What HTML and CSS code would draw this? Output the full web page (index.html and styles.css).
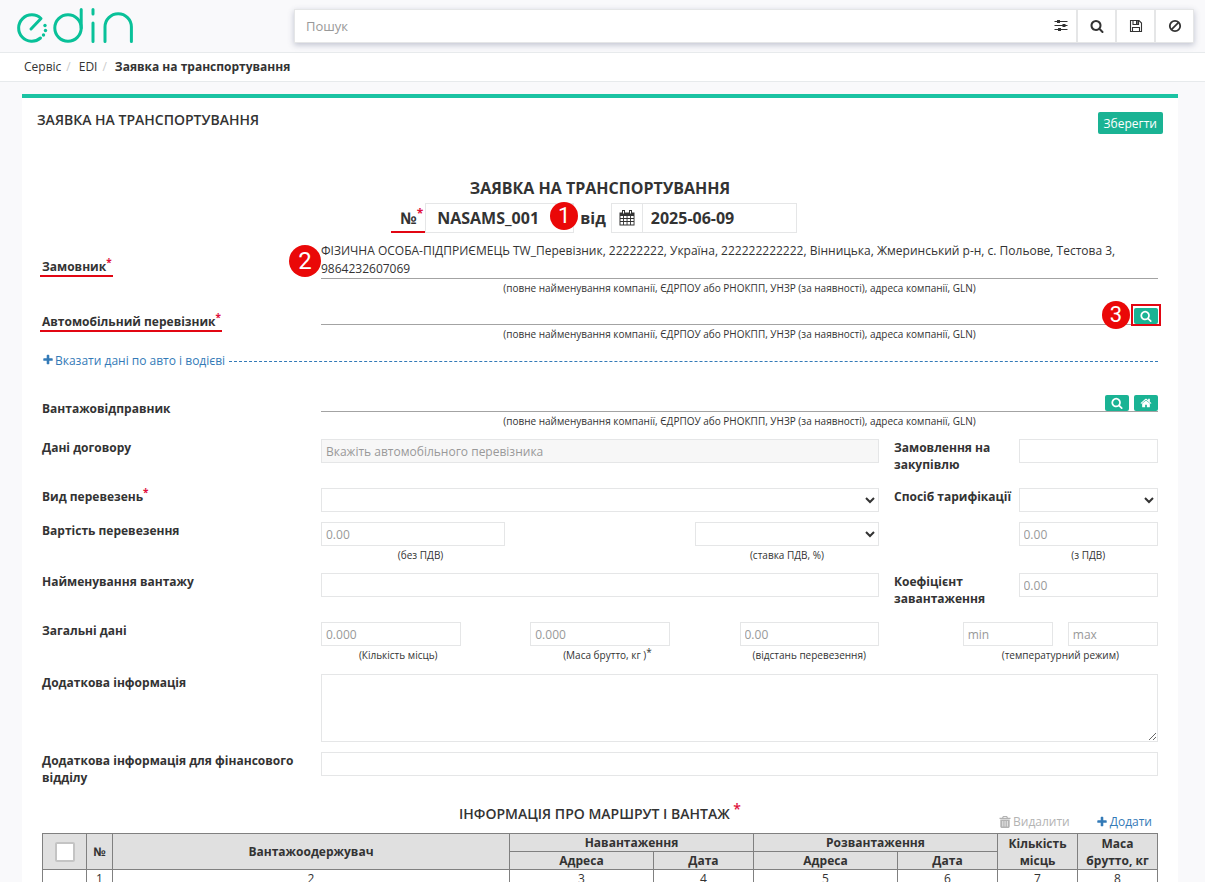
FILE: index.html
```html
<!DOCTYPE html>
<html lang="uk">
<head>
    <meta charset="UTF-8">
    <meta name="viewport" content="width=device-width, initial-scale=1.0">
    <title>Заявка на транспортування</title>
    <link rel="stylesheet" href="styles.css">
</head>
<body>
    <!-- icons -->
    <svg class="sprite" aria-hidden="true">
        <symbol id="i-search" viewBox="0 0 1792 1792"><path d="M1216 832q0-185-131.500-316.500t-316.500-131.500-316.500 131.500-131.500 316.500 131.500 316.500 316.500 131.500 316.500-131.500 131.500-316.500zm512 832q0 52-38 90t-90 38q-54 0-90-38l-343-342q-179 124-399 124-143 0-273.500-55.500t-225-150-150-225-55.500-273.500 55.500-273.500 150-225 225-150 273.500-55.500 273.500 55.500 225 150 150 225 55.500 273.500q0 220-124 399l343 343q37 37 37 90z"/></symbol>
        <symbol id="i-home" viewBox="0 0 1792 1792"><path d="M1472 992v480q0 26-19 45t-45 19h-384v-384h-256v384h-384q-26 0-45-19t-19-45v-480q0-1 .5-3t.5-3l575-474 575 474q1 2 1 6zm223-69l-62 74q-8 9-21 11h-3q-13 0-21-7l-692-577-692 577q-12 8-24 7-13-2-21-11l-62-74q-8-10-7-23.500t11-21.500l719-599q32-26 76-26t76 26l244 204v-195q0-14 9-23t23-9h192q14 0 23 9t9 23v408l219 182q10 8 11 21.500t-7 23.500z"/></symbol>
        <symbol id="i-plus" viewBox="0 0 1792 1792"><path d="M1600 736v192q0 40-28 68t-68 28h-416v416q0 40-28 68t-68 28h-192q-40 0-68-28t-28-68v-416h-416q-40 0-68-28t-28-68v-192q0-40 28-68t68-28h416v-416q0-40 28-68t68-28h192q40 0 68 28t28 68v416h416q40 0 68 28t28 68z"/></symbol>
        <symbol id="i-sliders" viewBox="0 0 14 14"><path d="M.5 2.500h13M.5 6.500h13M.5 10.500h13" fill="none" stroke="currentColor"/><path d="M3 1h3v3H3zM8.500 5h3v3h-3zM4 9h3v3H4z"/></symbol>
        <symbol id="i-save" viewBox="0 0 14 14"><path d="M1.500 1.500h8.500l2.500 2.500v8.500h-11zM3.500 12.500v-4h7v4M4 1.500v4h5.500v-4" fill="none" stroke="currentColor" stroke-width="1.100"/><path d="M7 2h1.700v3H7z"/></symbol>
        <symbol id="i-ban" viewBox="0 0 14 14"><g fill="none" stroke="currentColor" stroke-width="1.800"><circle cx="7" cy="7" r="5.200"/><path d="M3.400 10.600l7.200-7.200"/></g></symbol>
        <symbol id="i-trash" viewBox="0 0 12 12"><path fill-rule="evenodd" d="M4 0h4l1 1.700h2.500V3H.5V1.700H3zM4.300 1.700h3.400L7.300 1H4.700z"/><path fill-rule="evenodd" d="M1.300 3.500h9.400V11l-1 1H2.300l-1-1zM3.500 5v5.500h.7V5zm2.200 0v5.500h.7V5zm2.200 0v5.500h.7V5z"/></symbol>
        <symbol id="i-calendar" viewBox="0 0 16 16"><path d="M.5 2.500h15V15.500H.5z"/><path fill="#fff" d="M1.500 6h2.600v2H1.500zm3.500 0h2.600v2H5zm3.500 0h2.600v2H8.500zM12 6h2.600v2H12zM1.500 9h2.600v2H1.500zM5 9h2.600v2H5zm3.500 0h2.600v2H8.500zM12 9h2.600v2H12zM1.500 12h2.600v2.500H1.500zm3.500 0h2.600v2.500H5zm3.500 0h2.600v2.500H8.500zm3.500 0h2.600v2.500H12z"/><path d="M3 0h3v4.500H3zm7 0h3v4.500h-3z"/><path fill="#fff" d="M4 1h1v2.500H4zm7 0h1v2.500h-1z"/></symbol>
    </svg>

    <header class="topbar">
        <a href="#" class="logo" aria-label="edin">
            <svg width="120" height="40" viewBox="15 6 120 40">
                <g fill="none" stroke="#09c199" stroke-width="3" stroke-linecap="round" stroke-linejoin="round">
                    <path d="M31 29l10-10.500A13.200 13.200 0 1 0 40.500 38"/>
                    <circle cx="68" cy="28" r="13.200"/>
                    <path d="M81.200 9.500V28M93 9.500V14M93 23v18.500M105 41.500V27a13.200 13.200 0 0 1 26.400 0v14.500"/>
                </g>
                <g fill="#09c199"><circle cx="45" cy="25.500" r="1.700"/><circle cx="45.500" cy="30.500" r="1.700"/><circle cx="43.500" cy="35" r="1.700"/></g>
            </svg>
        </a>
        <form class="search">
            <input type="text" class="search-input" placeholder="Пошук" aria-label="Пошук">
            <button type="button" class="search-btn search-filter" aria-label="Фільтр"><svg class="icon-lg"><use href="#i-sliders"/></svg></button>
            <button type="button" class="search-btn" aria-label="Шукати"><svg class="icon-lg"><use href="#i-search"/></svg></button>
            <button type="button" class="search-btn" aria-label="Зберегти пошук"><svg class="icon-lg"><use href="#i-save"/></svg></button>
            <button type="button" class="search-btn" aria-label="Очистити"><svg class="icon-lg"><use href="#i-ban"/></svg></button>
        </form>
    </header>

    <nav class="breadcrumb">
        <a href="#">Сервіс</a>
        <a href="#">EDI</a>
        <strong>Заявка на транспортування</strong>
    </nav>

    <main class="panel">
        <div class="panel-head">
            <h1>ЗАЯВКА НА ТРАНСПОРТУВАННЯ</h1>
            <button type="button" class="btn-save">Зберегти</button>
        </div>

        <form class="order">
            <h2>ЗАЯВКА НА ТРАНСПОРТУВАННЯ</h2>
            <div class="doc-number">
                <label for="number" class="number-label">№<sup>*</sup></label>
                <div class="number-box">
                    <input type="text" id="number" value="NASAMS_001">
                    <span class="callout callout-number">1</span>
                </div>
                <label for="date" class="date-label">від</label>
                <span class="addon"><svg class="icon-cal"><use href="#i-calendar"/></svg></span>
                <input type="text" id="date" value="2025-06-09">
            </div>

            <div class="row party">
                <div class="label"><span class="marked">Замовник<sup>*</sup></span></div>
                <div class="wide">
                    <div class="line">
                        <span class="callout callout-customer">2</span>
                        ФІЗИЧНА ОСОБА-ПІДПРИЄМЕЦЬ TW_Перевізник, 22222222, Україна, 222222222222, Вінницька, Жмеринський р-н, с. Польове, Тестова 3, 9864232607069
                    </div>
                    <div class="hint">(повне найменування компанії, ЄДРПОУ або РНОКПП, УНЗР (за наявності), адреса компанії, GLN)</div>
                </div>
            </div>

            <div class="row party">
                <div class="label"><span class="marked">Автомобільний перевізник<sup>*</sup></span></div>
                <div class="wide">
                    <div class="line line-tools">
                        <span class="framed">
                            <span class="callout callout-carrier">3</span>
                            <button type="button" class="btn-icon" aria-label="Обрати перевізника"><svg class="icon"><use href="#i-search"/></svg></button>
                        </span>
                    </div>
                    <div class="hint">(повне найменування компанії, ЄДРПОУ або РНОКПП, УНЗР (за наявності), адреса компанії, GLN)</div>
                </div>
            </div>

            <div class="more">
                <a href="#"><svg class="icon"><use href="#i-plus"/></svg>Вказати дані по авто і водієві</a>
            </div>

            <div class="row party">
                <div class="label">Вантажовідправник</div>
                <div class="wide">
                    <div class="line line-tools">
                        <button type="button" class="btn-icon" aria-label="Обрати вантажовідправника"><svg class="icon"><use href="#i-search"/></svg></button>
                        <button type="button" class="btn-icon" aria-label="Моя компанія"><svg class="icon"><use href="#i-home"/></svg></button>
                    </div>
                    <div class="hint">(повне найменування компанії, ЄДРПОУ або РНОКПП, УНЗР (за наявності), адреса компанії, GLN)</div>
                </div>
            </div>

            <div class="row">
                <label class="label" for="contract">Дані договору</label>
                <div><input type="text" id="contract" placeholder="Вкажіть автомобільного перевізника" disabled></div>
                <label class="label label-side" for="purchase">Замовлення на закупівлю</label>
                <div><input type="text" id="purchase"></div>
            </div>

            <div class="row">
                <label class="label" for="kind">Вид перевезень<sup>*</sup></label>
                <div><select id="kind"><option></option></select></div>
                <label class="label label-side" for="tariff">Спосіб тарифікації</label>
                <div><select id="tariff"><option></option></select></div>
            </div>

            <div class="row">
                <label class="label" for="cost">Вартість перевезення</label>
                <div class="parts thirds">
                    <div>
                        <input type="text" id="cost" placeholder="0.00">
                        <div class="hint hint-shift">(без ПДВ)</div>
                    </div>
                    <div>
                        <select id="vat" aria-label="ставка ПДВ"><option></option></select>
                        <div class="hint">(ставка ПДВ, %)</div>
                    </div>
                </div>
                <div class="last">
                    <input type="text" placeholder="0.00" aria-label="з ПДВ">
                    <div class="hint">(з ПДВ)</div>
                </div>
            </div>

            <div class="row">
                <label class="label" for="cargo">Найменування вантажу</label>
                <div><input type="text" id="cargo"></div>
                <label class="label label-side" for="load">Коефіцієнт завантаження</label>
                <div><input type="text" id="load" placeholder="0.00"></div>
            </div>

            <div class="row">
                <label class="label" for="places">Загальні дані</label>
                <div class="parts quarters">
                    <div>
                        <input type="text" id="places" placeholder="0.000">
                        <div class="hint hint-shift">(Кількість місць)</div>
                    </div>
                    <div>
                        <input type="text" placeholder="0.000" aria-label="Маса брутто, кг">
                        <div class="hint hint-shift">(Маса брутто, кг )<sup>*</sup></div>
                    </div>
                    <div>
                        <input type="text" placeholder="0.00" aria-label="відстань перевезення">
                        <div class="hint">(відстань перевезення)</div>
                    </div>
                </div>
                <div class="temperature">
                    <div class="temperature-range">
                        <input type="text" placeholder="min" aria-label="min">
                        <input type="text" placeholder="max" aria-label="max">
                    </div>
                    <div class="hint">(температурний режим)</div>
                </div>
            </div>

            <div class="row">
                <label class="label" for="info">Додаткова інформація</label>
                <div class="wide"><textarea id="info"></textarea></div>
            </div>

            <div class="row">
                <label class="label" for="finance">Додаткова інформація для фінансового відділу</label>
                <div class="wide"><input type="text" id="finance"></div>
            </div>

            <div class="route-head">
                <h3>ІНФОРМАЦІЯ ПРО МАРШРУТ І ВАНТАЖ <sup>*</sup></h3>
                <div class="route-actions">
                    <button type="button" class="link-btn" disabled><svg class="icon"><use href="#i-trash"/></svg>Видалити</button>
                    <button type="button" class="link-btn"><svg class="icon"><use href="#i-plus"/></svg>Додати</button>
                </div>
            </div>

            <table class="route">
                <colgroup>
                    <col class="c-check"><col class="c-num"><col>
                    <col class="c-address"><col class="c-date">
                    <col class="c-address"><col class="c-date">
                    <col class="c-amount"><col class="c-amount">
                </colgroup>
                <thead>
                    <tr>
                        <th rowspan="2"><input type="checkbox" aria-label="Обрати все"></th>
                        <th rowspan="2">№</th>
                        <th rowspan="2">Вантажоодержувач</th>
                        <th colspan="2">Навантаження</th>
                        <th colspan="2">Розвантаження</th>
                        <th rowspan="2">Кількість місць</th>
                        <th rowspan="2">Маса брутто, кг</th>
                    </tr>
                    <tr>
                        <th>Адреса</th>
                        <th>Дата</th>
                        <th>Адреса</th>
                        <th>Дата</th>
                    </tr>
                </thead>
                <tbody>
                    <tr>
                        <td></td><td>1</td><td>2</td><td>3</td><td>4</td><td>5</td><td>6</td><td>7</td><td>8</td>
                    </tr>
                </tbody>
            </table>
        </form>
    </main>
</body>
</html>
```

FILE: styles.css
```css
*{
    box-sizing: border-box;
}
body{
    margin: 0;
    background-color: #f9f9fb;
    color: #333;
    font-family: "Open Sans", "Noto Sans", sans-serif;
    font-size: 12px;
    line-height: 17px;
}
h1, h2, h3{
    margin: 0;
    font-weight: 600;
}
h1, h3{
    font-size: 14px;
    line-height: 20px;
}
a{
    text-decoration: none;
}
input, select, textarea, button{
    font-family: inherit;
    font-size: 12px;
    color: inherit;
}
sup{
    color: #e0103c;
    font-size: 10px;
    line-height: 0;
    vertical-align: 5px;
}
h3 sup{
    font-size: 14px;
}
svg{
    fill: currentColor;
}
.sprite{
    position: absolute;
    width: 0;
    height: 0;
}
.icon{
    width: 12px;
    height: 12px;
}
.icon-lg{
    width: 14px;
    height: 14px;
}
.icon-cal{
    width: 16px;
    height: 16px;
}

/* header */
.topbar{
    display: flex;
    height: 53px;
    padding: 6px 11px 0 15px;
    border-bottom: 1px solid #e7eaec;
}
.search{
    display: flex;
    flex: 1;
    height: 34px;
    margin: 3px 0 0 159px;
    border: 1px solid #e5e6e7;
    background-color: #fff;
    box-shadow: 0 2px 6px rgba(60, 70, 110, 0.3);
}
.search-input{
    flex: 1;
    min-width: 0;
    padding: 0 11px;
    border: 0;
    background: none;
    font-size: 13px;
}
.search-btn{
    display: flex;
    align-items: center;
    justify-content: center;
    width: 39px;
    padding: 0;
    border: 0;
    border-left: 2px solid #e5e6e7;
    background: none;
}
.search-filter{
    width: 30px;
    border-left: 0;
}
.breadcrumb{
    display: flex;
    height: 29px;
    padding: 5px 24px;
    border-bottom: 1px solid #e7eaec;
    background-color: #fff;
}
.breadcrumb a{
    color: inherit;
}
.breadcrumb a::after{
    content: "/";
    padding: 0 8px 0 5px;
    color: #ccc;
}

/* form */
.panel{
    margin: 12px 27px 0 22px;
    border-top: 4px solid #1bc3a3;
    background-color: #fff;
}
.panel-head{
    display: flex;
    justify-content: space-between;
    padding: 12px 15px 0;
}
.btn-save{
    height: 22px;
    margin-top: 2px;
    padding: 0 6px;
    border: 0;
    border-radius: 2px;
    background-color: #1ab394;
    color: #fff;
}
.order{
    padding: 42px 20px 40px;
}
h2{
    font-size: 16px;
    font-weight: 700;
    line-height: 24px;
    text-align: center;
}
.doc-number{
    display: flex;
    justify-content: center;
    height: 30px;
    margin: 3px 0 9px;
    padding-right: 12px;
    font-size: 16px;
    font-weight: 700;
    line-height: 30px;
}
.doc-number input{
    height: 30px;
    padding: 0 11px;
    border: 1px solid #e5e6e7;
    font-size: 16px;
    font-weight: 700;
}
.number-label{
    width: 34px;
    padding-left: 9px;
    border-bottom: 2px solid #e20613;
    white-space: nowrap;
}
.number-label sup{
    font-size: 12px;
    vertical-align: 6px;
}
.number-box{
    position: relative;
}
.number-box input{
    width: 149px;
}
.date-label{
    padding: 0 5px 0 6px;
}
.addon{
    display: flex;
    align-items: center;
    justify-content: center;
    width: 31px;
    border: 1px solid #e5e6e7;
    border-right: 0;
}
.doc-number #date{
    width: 155px;
    padding: 0 8px;
}
.row{
    display: grid;
    grid-template-columns: minmax(0, 2fr) minmax(0, 4fr) minmax(0, 1fr) minmax(0, 1fr);
    margin-bottom: 10px;
}
.label{
    padding: 0 15px 5px 0;
    font-weight: 700;
}
.label-side{
    padding: 0 0 5px 15px;
}
.wide{
    grid-column: 2 / 5;
    min-width: 0;
}
.last{
    grid-column: 4;
}
.party .label{
    align-self: center;
}
.line{
    position: relative;
    min-height: 19px;
    border-bottom: 1px solid #a3a3a3;
    line-height: 18px;
}
.line-tools{
    display: flex;
    justify-content: flex-end;
    gap: 5px;
    height: 19px;
    padding-top: 2px;
}
.btn-icon{
    display: flex;
    align-items: center;
    justify-content: center;
    width: 24px;
    height: 16px;
    padding: 0;
    border: 0;
    border-radius: 2px;
    background-color: #1ab394;
    color: #fff;
}
.hint{
    padding-top: 2px;
    font-size: 10px;
    line-height: 15px;
    text-align: center;
}
.hint sup{
    color: inherit;
    vertical-align: 3px;
}
.hint-shift{
    padding-left: 15px;
}
.row input, .row select{
    display: block;
    width: 100%;
    height: 24px;
    padding: 0 4px;
    border: 1px solid #e5e6e7;
    border-radius: 0;
    background-color: #fff;
}
.row input:disabled{
    background-color: #f7f7f7;
}
::placeholder{
    color: #999;
}
textarea{
    display: block;
    width: 100%;
    height: 68px;
    border: 1px solid #e5e6e7;
}
.more{
    display: flex;
    align-items: center;
    gap: 4px;
    margin-bottom: 23px;
    color: #337ab7;
    font-weight: 500;
    line-height: 18px;
}
.more a{
    color: inherit;
}
.more .icon{
    margin-right: 1px;
    vertical-align: -1px;
}
.more::after{
    content: "";
    flex: 1;
    border-top: 1px dashed #337ab7;
}
.parts{
    display: flex;
    justify-content: space-between;
}
.thirds > div{
    width: 33%;
}
.quarters{
    padding-bottom: 1px;
}
.quarters > div{
    width: 25%;
}
.temperature{
    grid-column: 3 / 5;
    justify-self: end;
    width: 70%;
}
.temperature-range{
    display: flex;
    gap: 15px;
}

/* route table */
.route-head{
    display: grid;
    grid-template-columns: 1fr auto 1fr;
    height: 29px;
    margin-top: 13px;
}
.route-head h3{
    grid-column: 2;
}
.route-actions{
    display: flex;
    align-items: flex-end;
    justify-content: flex-end;
    gap: 26px;
    padding: 0 6px 3px 0;
}
.link-btn{
    display: flex;
    align-items: center;
    gap: 2px;
    padding: 0;
    border: 0;
    background: none;
    color: #337ab7;
    line-height: 17px;
}
.link-btn:disabled{
    color: #b3b3b3;
}
.route{
    width: 100%;
    border-collapse: collapse;
    table-layout: fixed;
    text-align: center;
}
.route th, .route td{
    padding: 0 4px;
    border: 1px solid #808080;
}
.route th{
    background-color: #e0e0e0;
    font-weight: 700;
}
.route input{
    display: block;
    width: 20px;
    height: 20px;
    margin: 0 auto;
    border: 2px solid #c4c4c4;
    border-radius: 2px;
    background-color: #fff;
    appearance: none;
}
.c-check{
    width: 44px;
}
.c-num{
    width: 26px;
}
.c-address{
    width: 144px;
}
.c-date{
    width: 100px;
}
.c-amount{
    width: 80px;
}

/* walkthrough marks */
.marked{
    position: relative;
}
.marked::after{
    content: "";
    position: absolute;
    left: -2px;
    right: -1px;
    bottom: -2px;
    height: 2px;
    background-color: #e20613;
}
.framed{
    position: relative;
}
.framed::after{
    content: "";
    position: absolute;
    top: -4px;
    right: -3px;
    bottom: -2px;
    left: -3px;
    border: 2px solid #e20613;
}
.callout{
    position: absolute;
    width: 28px;
    height: 28px;
    border-radius: 50%;
    background-color: #ea0808;
    color: #fff;
    font-family: Roboto, sans-serif;
    font-size: 22px;
    font-weight: 400;
    line-height: 28px;
    text-align: center;
}
.callout-number{
    top: -1px;
    right: -4px;
}
.callout-customer{
    top: 3px;
    left: -32px;
    width: 32px;
    height: 32px;
    font-size: 24px;
    line-height: 32px;
}
.callout-carrier{
    top: -7px;
    right: 28px;
}
```
